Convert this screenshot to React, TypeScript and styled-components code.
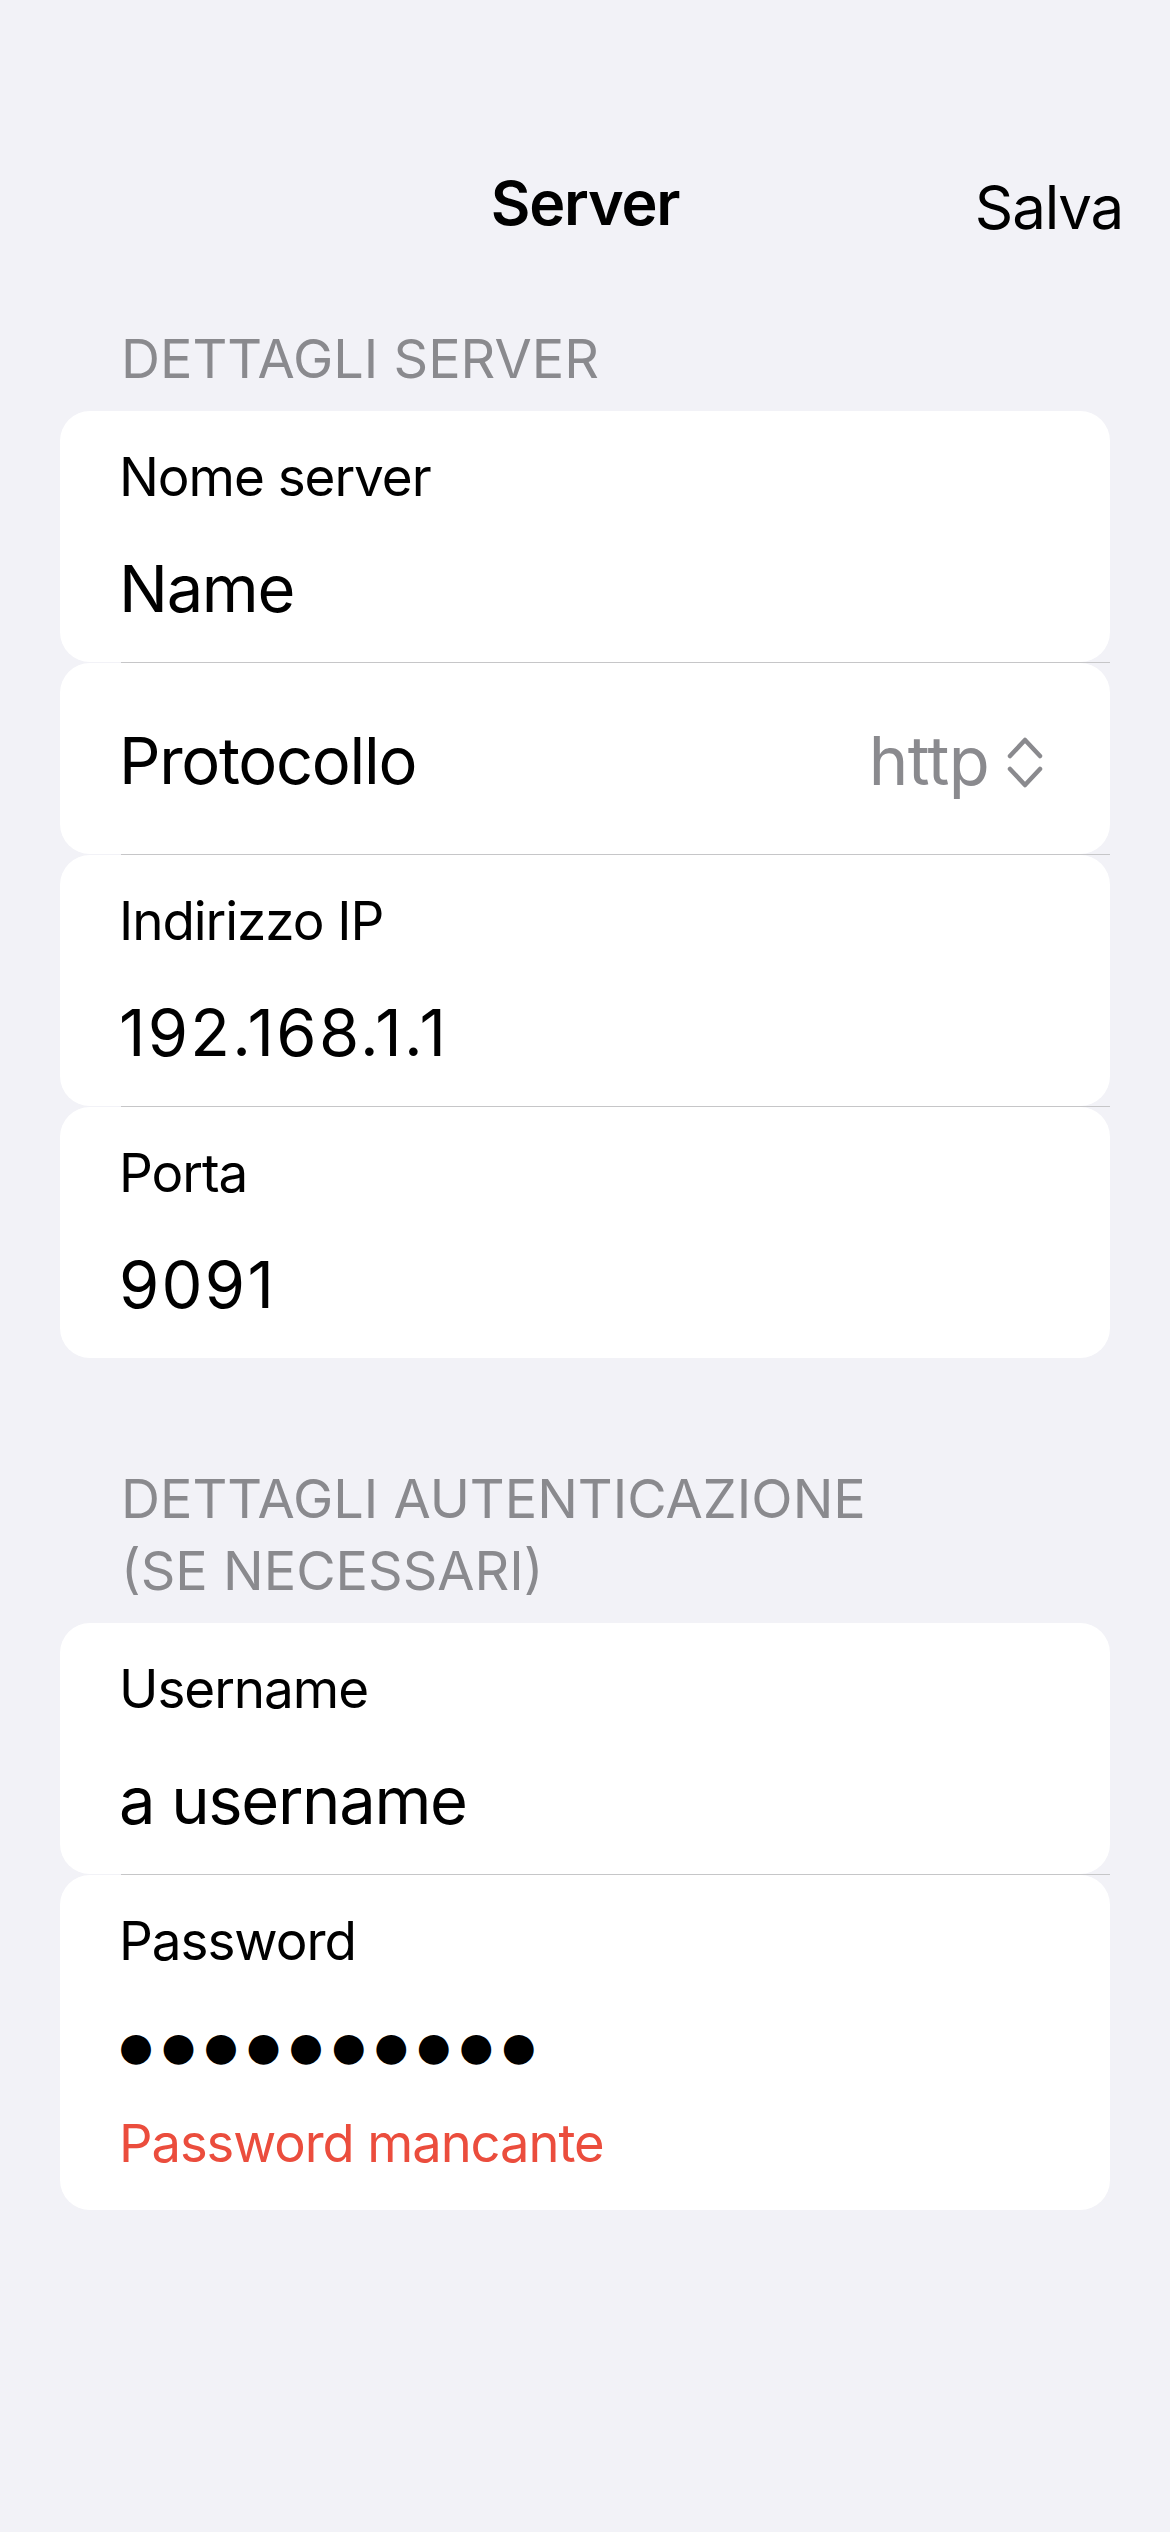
import React from "react";
import styled, { createGlobalStyle } from "styled-components";

const GlobalStyle = createGlobalStyle`
  html, body {
    margin: 0;
    padding: 0;
    background: #f2f2f7;
  }
  body {
    font-family: Inter, "Noto Sans", "Liberation Sans", sans-serif;
    color: #000;
    -webkit-font-smoothing: antialiased;
  }
  * { box-sizing: border-box; }
`;

const Page = styled.div`
  min-height: 2532px;
  background: #f2f2f7;
  display: flex;
  flex-direction: column;
`;

const NavBar = styled.header`
  display: grid;
  grid-template-columns: 1fr auto 1fr;
  align-items: start;
  padding: 167px 47px 0 47px;
`;

const NavTitle = styled.h1`
  grid-column: 2;
  margin: 0;
  font-size: 61px;
  line-height: 72px;
  font-weight: 600;
  letter-spacing: -0.02em;
`;

const NavAction = styled.button`
  grid-column: 3;
  justify-self: end;
  margin: 4px 0 0 0;
  padding: 0;
  border: none;
  background: none;
  font-family: inherit;
  font-size: 60px;
  line-height: 72px;
  font-weight: 400;
  letter-spacing: -0.02em;
  color: #000;
`;

const Section = styled.section<{ $gap: number }>`
  display: flex;
  flex-direction: column;
  padding: 0 60px;
  margin-top: ${(p) => p.$gap}px;
`;

const SectionHeader = styled.h2`
  margin: 0;
  padding: 0 40px 16px 61px;
  font-size: 54px;
  line-height: 72px;
  font-weight: 400;
  letter-spacing: 0;
  color: #8a8a8e;
  text-transform: uppercase;
`;

const List = styled.div`
  display: flex;
  flex-direction: column;
`;

const Row = styled.div`
  background: #fff;
  border-radius: 30px;
  padding: 34px 60px 35px 59px;
  display: flex;
  flex-direction: column;
`;

const PickerRowBox = styled.div`
  background: #fff;
  border-radius: 30px;
  padding: 60px 67px 55px 59px;
  display: flex;
  align-items: center;
  justify-content: space-between;
`;

const Separator = styled.div`
  height: 1px;
  margin-left: 61px;
  background: #c6c6c8;
`;

const FieldLabel = styled.div`
  font-size: 53px;
  line-height: 64px;
  letter-spacing: -0.02em;
  color: #000;
`;

const FieldValue = styled.div<{ $numeric?: boolean }>`
  margin-top: 42px;
  font-size: 65px;
  line-height: 76px;
  letter-spacing: ${(p) => (p.$numeric ? "0.035em" : "-0.02em")};
  color: #000;
`;

const PickerLabel = styled.div`
  font-size: 65px;
  line-height: 76px;
  letter-spacing: -0.02em;
`;

const PickerValue = styled.div`
  display: flex;
  align-items: center;
  gap: 18px;
  color: #8a8a8e;
  font-size: 67px;
  line-height: 76px;
  letter-spacing: -0.01em;
`;

const Chevrons = styled.svg`
  width: 36px;
  height: 51px;
  margin-top: 2px;
  flex: none;
`;

const PasswordMask = styled.div`
  margin-top: 36px;
  font-family: "DejaVu Sans", sans-serif;
  font-size: 39px;
  line-height: 76px;
  letter-spacing: 8.5px;
  color: #000;
`;

const ErrorText = styled.div`
  margin-top: 26px;
  font-size: 52.5px;
  line-height: 64px;
  letter-spacing: -0.02em;
  color: #eb4d3d;
`;

function Field({ label, value, numeric }: { label: string; value: string; numeric?: boolean }) {
  return (
    <Row>
      <FieldLabel>{label}</FieldLabel>
      <FieldValue $numeric={numeric}>{value}</FieldValue>
    </Row>
  );
}

function UpDownChevron() {
  return (
    <Chevrons viewBox="0 0 36 51" fill="none" stroke="#8a8a8e" strokeWidth="4.5" strokeLinecap="round" strokeLinejoin="round">
      <path d="M3 19 L18 3 L33 19" />
      <path d="M3 32 L18 48 L33 32" />
    </Chevrons>
  );
}

export default function App() {
  return (
    <>
      <GlobalStyle />
      <Page>
        <NavBar>
          <NavTitle>Server</NavTitle>
          <NavAction>Salva</NavAction>
        </NavBar>

        <Section $gap={80}>
          <SectionHeader>Dettagli server</SectionHeader>
          <List>
            <Field label="Nome server" value="Name" />
            <Separator />
            <PickerRowBox>
              <PickerLabel>Protocollo</PickerLabel>
              <PickerValue>
                <span>http</span>
                <UpDownChevron />
              </PickerValue>
            </PickerRowBox>
            <Separator />
            <Field label="Indirizzo IP" value="192.168.1.1" numeric />
            <Separator />
            <Field label="Porta" value="9091" numeric />
          </List>
        </Section>

        <Section $gap={105}>
          <SectionHeader>
            Dettagli autenticazione
            <br />
            (se necessari)
          </SectionHeader>
          <List>
            <Field label="Username" value="a username" />
            <Separator />
            <Row>
              <FieldLabel>Password</FieldLabel>
              <PasswordMask>●●●●●●●●●●</PasswordMask>
              <ErrorText>Password mancante</ErrorText>
            </Row>
          </List>
        </Section>
      </Page>
    </>
  );
}
